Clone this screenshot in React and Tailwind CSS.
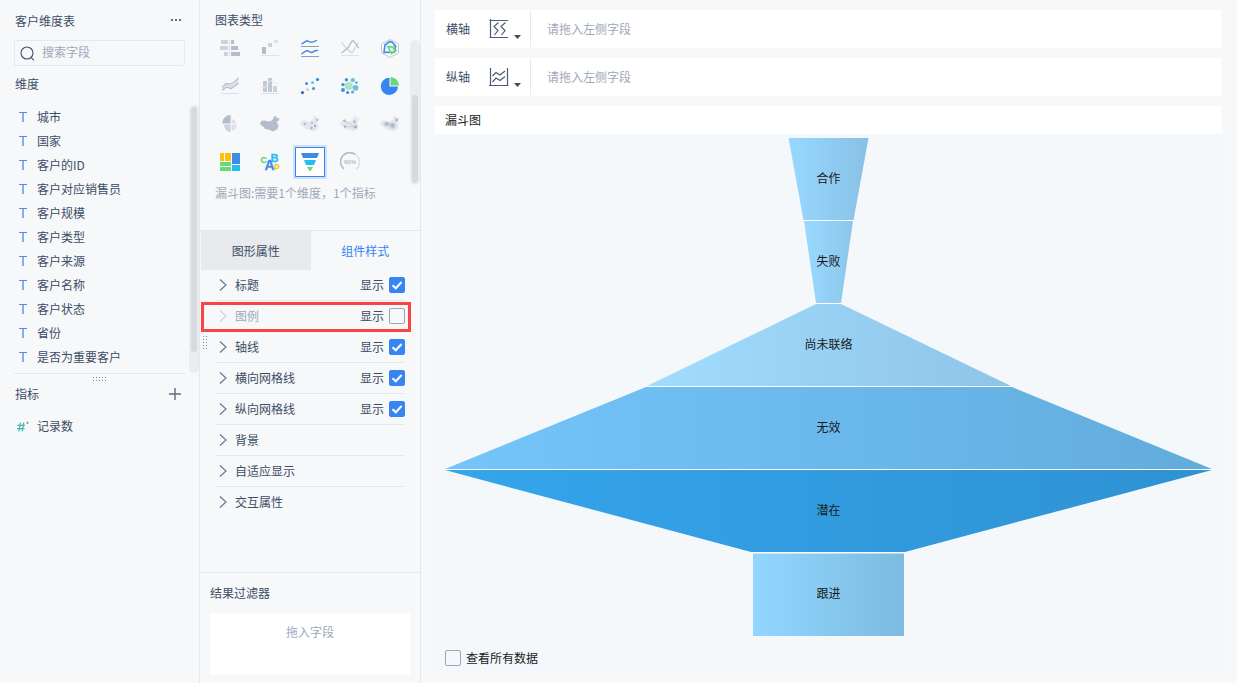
import { useState } from "react";

const dimensions = [
  "城市", "国家", "客户的ID", "客户对应销售员", "客户规模", "客户类型",
  "客户来源", "客户名称", "客户状态", "省份", "是否为重要客户",
];

const CHINA =
  "M0 9L2 6.6L5 6.4L8 7.4L11 7L13.2 5L13.4 3L15.4 1.8L17 4L19.6 4.2L18.8 6.6L16.4 8L17.6 9.6L18.6 12.4L17 15.4L14 17L12.4 17.6L11 16.4L8 15.6L5 15L3.4 12.6L1 11.4Z";

const chartTypes = [
  { name: "对比柱状图", art: (
    <>
      <path fill="#cdd3dd" d="M1 2h7v4H1zM0 8h8v4H0zM4 14h4v4H4z" />
      <path fill="#b4bdc9" d="M11 2h3v4h-3zM11 8h7v4h-7zM11 14h9v4h-9z" />
      <path fill="#dde2ea" d="M9 2h1v17H9z" />
    </>
  ) },
  { name: "瀑布图", art: (
    <>
      <path fill="#b4bdc9" d="M2 9h4v7H2z" />
      <path fill="#cdd3dd" d="M8 5h4v4H8z" />
      <path fill="#dde2ea" d="M14 2h4v3h-4zM1 17h18v1H1z" />
    </>
  ) },
  { name: "折线图", art: (
    <>
      <path fill="none" stroke="#3f8ce8" strokeWidth="1.4" d="M1.5 6.2L6.6 2.8L11.8 4.3L17 2.4M1.5 16.2L4 14L7 12.6L11.8 14.6L15 12.8L18.2 12.4" />
      <path fill="#8f9bb0" d="M1 8h18v1H1zM1 18h18v1H1z" />
    </>
  ) },
  { name: "多轴折线图", art: (
    <>
      <path fill="none" stroke="#cdd3dd" strokeWidth="1.2" d="M1.5 4L6.5 10.5L12 15L18.5 4.5" />
      <path fill="none" stroke="#b4bdc9" strokeWidth="1.3" d="M1.5 15.2L8 9.6L12.4 2.6L13.6 3L18.8 10.2" />
      <path fill="#dde2ea" d="M1 17h18v1H1z" />
    </>
  ) },
  { name: "雷达图", art: (
    <>
      <path fill="none" stroke="#c3cad5" d="M10 1.5L18.5 5.8V14.8L10 19.5L1.5 14.8V5.8Z" />
      <path fill="none" stroke="#3f8ce8" strokeWidth="1.6" d="M5 7L9.6 3.6L12 4L15.6 8L14.4 14.2L10.2 14.2L4 14.4Z" />
      <path fill="none" stroke="#67d977" strokeWidth="1.6" d="M7.8 8.6L14.4 9L13.4 11L16 12.6L11.4 15.6Z" />
    </>
  ) },
  { name: "面积图", art: (
    <>
      <path fill="#dde2ea" d="M2 11.4L6 7.4L10 8L14 7.4L18.5 2V8L12 12.4L8 11L2 14.6Z" />
      <path fill="none" stroke="#b4bdc9" strokeWidth="1.1" d="M2 11.4L6 7.4L10 8L14 6.4L18.5 2M2 14.6L6.4 11L11 12.6L18.5 7.4" />
      <path fill="#dde2ea" d="M1 17h18v1H1z" />
    </>
  ) },
  { name: "组合图", art: (
    <>
      <path fill="#c1c9d4" d="M3 5h4v11H3zM8 2h4v14H8z" />
      <path fill="#cdd3dd" d="M13 10h4v6h-4z" />
      <path fill="none" stroke="#e4e8ef" d="M1 11.4H5L8.6 6L11.8 4.4L14.4 7.6H18.6" />
      <path fill="#dde2ea" d="M1 17h18v1H1z" />
    </>
  ) },
  { name: "散点图", art: (
    <>
      <circle cx="2.5" cy="16.6" r="1.6" fill="#3a66c4" />
      <circle cx="7.5" cy="13.5" r="1.5" fill="#aee3d0" />
      <circle cx="13.5" cy="12.5" r="1.5" fill="#3f8ce8" />
      <circle cx="6.5" cy="7.5" r="1.5" fill="#3f8ce8" />
      <circle cx="12.5" cy="6.5" r="1.5" fill="#6fc1d6" />
      <circle cx="17.5" cy="3.5" r="1.6" fill="#1c8fdd" />
    </>
  ) },
  { name: "气泡图", art: (
    <>
      <circle cx="8.8" cy="10" r="4.1" fill="#aee3c8" />
      <circle cx="15.6" cy="11.8" r="2.9" fill="#6fc1d6" />
      <circle cx="12.8" cy="4.2" r="2.1" fill="#6fc1d6" />
      <circle cx="6.4" cy="3.8" r="1.7" fill="#3a94dc" />
      <circle cx="3" cy="8.6" r="1.7" fill="#3a94dc" />
      <circle cx="3" cy="14" r="2" fill="#3a94dc" />
      <circle cx="7.6" cy="16.6" r="1.5" fill="#1c8fdd" />
      <circle cx="12.6" cy="16" r="1.6" fill="#4fb0dc" />
      <circle cx="16.4" cy="6.6" r="1.2" fill="#3f8ce8" />
    </>
  ) },
  { name: "饼图", art: (
    <>
      <path fill="#3685f2" d="M9.5 10.5H18A8.6 8.6 0 1 1 9.5 1.8Z" />
      <path fill="#67d977" d="M10.5 9.5V1A8.6 8.6 0 0 1 19 9.5Z" />
    </>
  ) },
  { name: "玫瑰图", art: (
    <>
      <path fill="#b4bdc9" d="M10.6 9.5H2A8.6 8.6 0 0 1 10.6 1Z" />
      <path fill="#cdd3dd" d="M10.6 10.5V18A7 7 0 0 1 4 10.5Z" />
      <path fill="#dde2ea" d="M11.6 10.5H17A5.8 5.8 0 0 1 11.6 16.6ZM11.6 9.5V5A5 5 0 0 1 16 9.5Z" />
    </>
  ) },
  { name: "区域地图", art: <path fill="#b4bdc9" d={CHINA} /> },
  { name: "点地图", art: (
    <>
      <path fill="#e2e7f0" d={CHINA} />
      <g fill="#a5afc0">
        <circle cx="5" cy="10" r="1" /><circle cx="12" cy="9" r="1" /><circle cx="17" cy="6" r="1" />
        <circle cx="11.5" cy="14" r="1.2" /><circle cx="15" cy="12" r="1.2" />
      </g>
    </>
  ) },
  { name: "流向地图", art: (
    <>
      <path fill="#e2e7f0" d={CHINA} />
      <path fill="none" stroke="#c3cad8" strokeWidth="0.8" d="M4 6.5L15.5 13L14.5 7.5M15.5 13L5 12.6" />
      <g fill="#a5afc0">
        <circle cx="4.4" cy="6.6" r="1.2" /><circle cx="14.6" cy="7.6" r="1.2" />
        <circle cx="5" cy="12.6" r="1.2" /><circle cx="15.6" cy="13" r="1.5" />
      </g>
    </>
  ) },
  { name: "热力地图", art: (
    <>
      <defs>
        <radialGradient id="heat">
          <stop offset="0" stopColor="#a0aabd" />
          <stop offset="1" stopColor="#a0aabd" stopOpacity="0" />
        </radialGradient>
      </defs>
      <path fill="#e2e7f0" d={CHINA} />
      <ellipse cx="7" cy="10" rx="4" ry="3" fill="url(#heat)" />
      <circle cx="12.5" cy="11.5" r="4" fill="url(#heat)" />
      <circle cx="16.5" cy="6" r="2.4" fill="url(#heat)" />
    </>
  ) },
  { name: "矩形树图", art: (
    <>
      <path fill="#fdc00f" d="M0 1h4v8H0zM5 1h6v8H5z" />
      <path fill="#3f8ce8" d="M12 1h8v11h-8z" />
      <path fill="#67d977" d="M0 10h11v4H0zM0 15h11v4H0z" />
      <path fill="#28bdf0" d="M12 13h8v6h-8z" />
    </>
  ) },
  { name: "词云", art: (
    <g fontFamily="Liberation Sans, sans-serif" fontWeight="700" strokeWidth="0.3">
      <text x="0.6" y="11" fontSize="9" fill="#67d977" stroke="#67d977">C</text>
      <text x="10.6" y="9.8" fontSize="11" fill="#28bdf0" stroke="#28bdf0">B</text>
      <text x="4.4" y="18" fontSize="14" fill="#3f8ce8" stroke="#3f8ce8">A</text>
      <text x="14.4" y="16.6" fontSize="7" fill="#fdc00f" stroke="#fdc00f">D</text>
    </g>
  ) },
  { name: "漏斗图", art: (
    <>
      <path fill="#3f8ce8" d="M1 1h18l-2 5H3z" />
      <path fill="#28bdf0" d="M4 8h12l-2 5H6z" />
      <path fill="#67d977" d="M7 15h6l-2.4 4H9.4z" />
    </>
  ) },
  { name: "仪表盘", art: (
    <>
      <path fill="none" stroke="#b4bdc9" strokeWidth="1.7" d="M4 17A9 9 0 0 1 15.5 2.6" />
      <path fill="none" stroke="#dde2ea" strokeWidth="1.7" d="M15.5 2.6A9 9 0 0 1 16.4 17" />
      <text x="10" y="12.4" textAnchor="middle" fontSize="6" fontWeight="700" fontFamily="Liberation Sans, sans-serif" fill="#b4bdc9">60%</text>
    </>
  ) },
];

const sections = [
  { name: "标题", shown: true },
  { name: "图例", shown: false },
  { name: "轴线", shown: true },
  { name: "横向网格线", shown: true },
  { name: "纵向网格线", shown: true },
  { name: "背景" },
  { name: "自适应显示" },
  { name: "交互属性" },
];

const funnel = [
  { label: "合作", points: "343.5,0 423.5,0 408.5,82 358.5,82", from: "#98d8ff", to: "#88c1e6" },
  { label: "失败", points: "359,83 408,83 396,165 371,165", from: "#9adaff", to: "#8cc5ea" },
  { label: "尚未联络", points: "371,166 396,166 566,248 202,248", from: "#a1dcff", to: "#8fc4e7" },
  { label: "无效", points: "201,249 567,249 767,331 0,331", from: "#74c5fb", to: "#62acdc" },
  { label: "潜在", points: "0,332 767,332 460,414 306,414", from: "#35a5ec", to: "#2e92d2" },
  { label: "跟进", points: "308,415.5 459,415.5 459,498 308,498", from: "#92d6ff", to: "#7dbbe0" },
];

function Checkbox({ id, defaultChecked }) {
  return (
    <span className="relative inline-flex size-4 shrink-0">
      <input
        id={id}
        type="checkbox"
        defaultChecked={defaultChecked}
        className="peer size-4 appearance-none rounded-xs border border-[#9ca6b8] checked:border-[#3685f2] checked:bg-[#3685f2]"
      />
      <svg viewBox="0 0 16 16" className="pointer-events-none absolute inset-0 hidden size-4 peer-checked:block">
        <path d="M3.5 8.3L6.8 11.3L12.6 5" fill="none" stroke="#fff" strokeWidth="2" />
      </svg>
    </span>
  );
}

function Grip({ className, vertical }) {
  return (
    <svg width={vertical ? 5 : 13} height={vertical ? 13 : 5} className={className} fill="#7d879c" aria-hidden="true">
      {[0, 3, 6, 9, 12].map((a) =>
        [0, 3].map((b) => (
          <rect key={`${a}-${b}`} x={vertical ? b : a} y={vertical ? a : b} width="1" height="1" />
        ))
      )}
    </svg>
  );
}

function FieldPanel() {
  return (
    <aside className="flex w-[200px] shrink-0 flex-col border-r border-[#e6e8ec] pl-[14px]">
      <header className="flex h-10 items-center justify-between pl-px pr-[17px] pt-0.5">
        <h1>客户维度表</h1>
        <button type="button" aria-label="更多" className="pb-0.5">
          <svg width="12" height="4" fill="#5f6b84"><path d="M1 1h2v2H1zM5 1h2v2H5zM9 1h2v2H9z" /></svg>
        </button>
      </header>
      <label className="mr-[14px] flex h-[26px] items-center gap-[7px] rounded-xs border border-[#e6e8ec] px-[5px]">
        <svg width="15" height="15" viewBox="0 0 15 15" fill="none" stroke="#44516b" strokeWidth="1.1">
          <circle cx="7" cy="7" r="6" />
          <path d="M11 11.4L14 14.4" />
        </svg>
        <input type="search" aria-label="搜索字段" placeholder="搜索字段" className="w-0 flex-1 bg-transparent pb-0.5 outline-none placeholder:text-[#a0a8b8]" />
      </label>
      <h2 className="mb-0.5 flex h-9 items-center pl-px">维度</h2>
      <div className="flex pt-px">
        <ul className="flex-1">
          {dimensions.map((name) => (
            <li key={name} className="flex h-6 items-center gap-[10px] pl-[5px]">
              <svg width="8" height="10" fill="#5b8ae6"><path d="M0 0h8v1H0z" /><path d="M3.3 1h1.4v9H3.3z" /></svg>
              {name}
            </li>
          ))}
        </ul>
        <div className="h-[268px] w-[10px] rounded-full bg-[#ebecef] p-0.5">
          <div className="h-[245px] rounded-full bg-[#d7d9de]" />
        </div>
      </div>
      <div className="mr-[14px] flex h-[9px] items-end justify-center border-t border-[#e6e8ec]">
        <Grip />
      </div>
      <div className="flex h-6 items-center justify-between pl-px pr-[18px]">
        <h2>指标</h2>
        <button type="button" aria-label="添加指标">
          <svg width="12" height="12" fill="none" stroke="#5f6b84" strokeWidth="1.4"><path d="M6 0v12M0 6h12" /></svg>
        </button>
      </div>
      <div className="mt-2 flex h-6 items-center gap-2 pl-[3px]">
        <svg width="12" height="11" fill="none" stroke="#3fb9ab" strokeWidth="1.2">
          <path d="M3.4 1.6L1.8 10.4M6.8 1.6L5.2 10.4M0.6 4.4H8M0 7.6H7.4" />
          <circle cx="10.5" cy="1.8" r="1.1" fill="#3fb9ab" stroke="none" />
        </svg>
        记录数
      </div>
    </aside>
  );
}

function StylePanel() {
  const [type, setType] = useState("漏斗图");
  return (
    <aside className="relative flex w-[221px] shrink-0 flex-col border-r border-[#e6e8ec]">
      <h2 className="flex h-[39px] items-center pl-[15px]">图表类型</h2>
      <div className="flex h-[145px] pl-[10px]">
        <div className="grid w-[200px] grid-cols-5 content-start">
          {chartTypes.map(({ name, art }, i) => (
            <button
              key={name}
              type="button"
              aria-label={name}
              aria-pressed={name === type}
              onClick={() => setType(name)}
              className={i < 5 ? "flex h-7 items-end justify-center pb-[9px]" : "flex h-[38px] items-center justify-center"}
            >
              <span className={name === type ? "flex size-[30px] items-center justify-center border border-[#3685f2] bg-white ring-2 ring-[#d0e1f8]" : "flex"}>
                <svg width="20" height="20" viewBox="0 0 20 20">{art}</svg>
              </span>
            </button>
          ))}
        </div>
        <div className="mt-px h-[145px] w-[10px] rounded-full bg-[#ebecef] px-0.5 pt-[55px]">
          <div className="h-[88px] rounded-full bg-[#d7d9de]" />
        </div>
      </div>
      <p className="h-[46px] pl-[15px] text-[#a0a8b8]">漏斗图:需要1个维度，1个指标</p>
      <div role="tablist" className="flex h-10 border-t border-[#e6e8ec] pl-px">
        <button type="button" role="tab" aria-selected="false" className="flex-1 bg-[#e8eaed]">图形属性</button>
        <button type="button" role="tab" aria-selected="true" className="flex-1 text-[#3685f2]">组件样式</button>
      </div>
      <ul className="px-[15px]">
        {sections.map(({ name, shown }, i) => (
          <li key={name} className="relative flex h-[31px] items-center justify-between border-b border-[#e6e8ec] last:border-transparent">
            <button type="button" className={shown === false ? "flex items-center gap-[7px] text-[#a0a8b8]" : "flex items-center gap-[7px]"}>
              <svg width="12" height="12" fill="none" stroke={shown === false ? "#ced3dc" : "#6b7790"} strokeWidth="1.2" className="ml-px">
                <path d="M4 0.5L10 6L4 11.5" />
              </svg>
              {name}
            </button>
            {shown !== undefined && (
              <span className="flex items-center gap-[5px]">
                <label htmlFor={`section-${i}`}>显示</label>
                <Checkbox id={`section-${i}`} defaultChecked={shown} />
              </span>
            )}
            {shown === false && (
              <span className="pointer-events-none absolute -left-[14px] -right-[6px] top-px h-[30px] border-3 border-[#fa4343]" />
            )}
          </li>
        ))}
      </ul>
      <Grip vertical className="absolute left-[3px] top-[336px]" />
      <section className="mt-auto border-t border-[#e6e8ec] px-[10px] pb-2">
        <h2 className="flex h-10 items-center">结果过滤器</h2>
        <div className="h-[62px] bg-white pt-[10px] text-center text-[#a0a8b8]">拖入字段</div>
      </section>
    </aside>
  );
}

function AxisRow({ name, children }) {
  return (
    <div className="flex h-[38px] items-center bg-white pl-[11px]">
      <span className="w-[43px]">{name}</span>
      <button type="button" aria-label={`${name}设置`} className="flex h-[38px] w-[41px] items-center gap-[5px]">
        <svg width="20" height="20" viewBox="0 0 20 20" fill="none" stroke="#4f5c77" strokeWidth="1.2">{children}</svg>
        <svg width="8" height="4" className="mt-4" fill="#3d4d66"><path d="M0 0h7L3.5 4z" /></svg>
      </button>
      <div className="flex h-9 flex-1 items-center border-l border-[#e6e8ec] pl-4 text-[#a0a8b8]">请拖入左侧字段</div>
    </div>
  );
}

function FunnelChart() {
  return (
    <figure className="relative mx-[10px] flex-1">
      <svg viewBox="0 0 767 498" preserveAspectRatio="none" className="absolute inset-0 size-full" role="img" aria-label="漏斗图">
        <defs>
          {funnel.map(({ from, to }, i) => (
            <linearGradient key={i} id={`level-${i}`}>
              <stop offset="0" stopColor={from} />
              <stop offset="1" stopColor={to} />
            </linearGradient>
          ))}
        </defs>
        <path fill="#fff" d="M358.5 81.6h50v1.8h-50zM371 164.6h25v1.8h-25zM202 247.6h365v1.8H202zM0 330.6h767v1.8H0zM306 413.6h154v1.8H306z" />
        {funnel.map(({ label, points }, i) => (
          <polygon key={label} points={points} fill={`url(#level-${i})`} />
        ))}
      </svg>
      <div className="relative grid h-full grid-rows-6">
        {funnel.map(({ label }) => (
          <span key={label} className="flex items-center justify-center pb-1 text-[#1a1a1a]">{label}</span>
        ))}
      </div>
    </figure>
  );
}

export default function App() {
  return (
    <div className="flex min-h-screen bg-[#f7f8fa] font-['Noto_Sans_CJK_SC',sans-serif] text-[12px] leading-[18px] text-[#3d4d66]">
      <FieldPanel />
      <StylePanel />
      <main className="flex min-w-0 flex-1 flex-col gap-[10px] py-[10px] pl-[14px] pr-[15px]">
        <AxisRow name="横轴">
          <path d="M1.5 0V19M0.5 1.5H19M0.5 18.5H19" />
          <path d="M9.5 3.5L5 7.5L9 11.5L5.5 16M16.5 3.5L12 7.5L16 11.5L12.5 16" />
        </AxisRow>
        <AxisRow name="纵轴">
          <path d="M1.5 1V18.5H18.5V1M0 18.5H19.5" />
          <path d="M3.5 9L7 5.5L11 8L16 4M3.5 15L7 11L11 13.5L16 9.5" />
        </AxisRow>
        <section className="flex flex-1 flex-col bg-[#f4f8fb]">
          <h2 className="mb-1 flex h-7 items-center bg-white pl-[10px] text-[#1a1a1a]">漏斗图</h2>
          <FunnelChart />
          <div className="flex h-[37px] items-center gap-[5px] pl-[10px] pt-1.5 text-[#1a1a1a]">
            <Checkbox id="all-data" />
            <label htmlFor="all-data">查看所有数据</label>
          </div>
        </section>
      </main>
    </div>
  );
}
